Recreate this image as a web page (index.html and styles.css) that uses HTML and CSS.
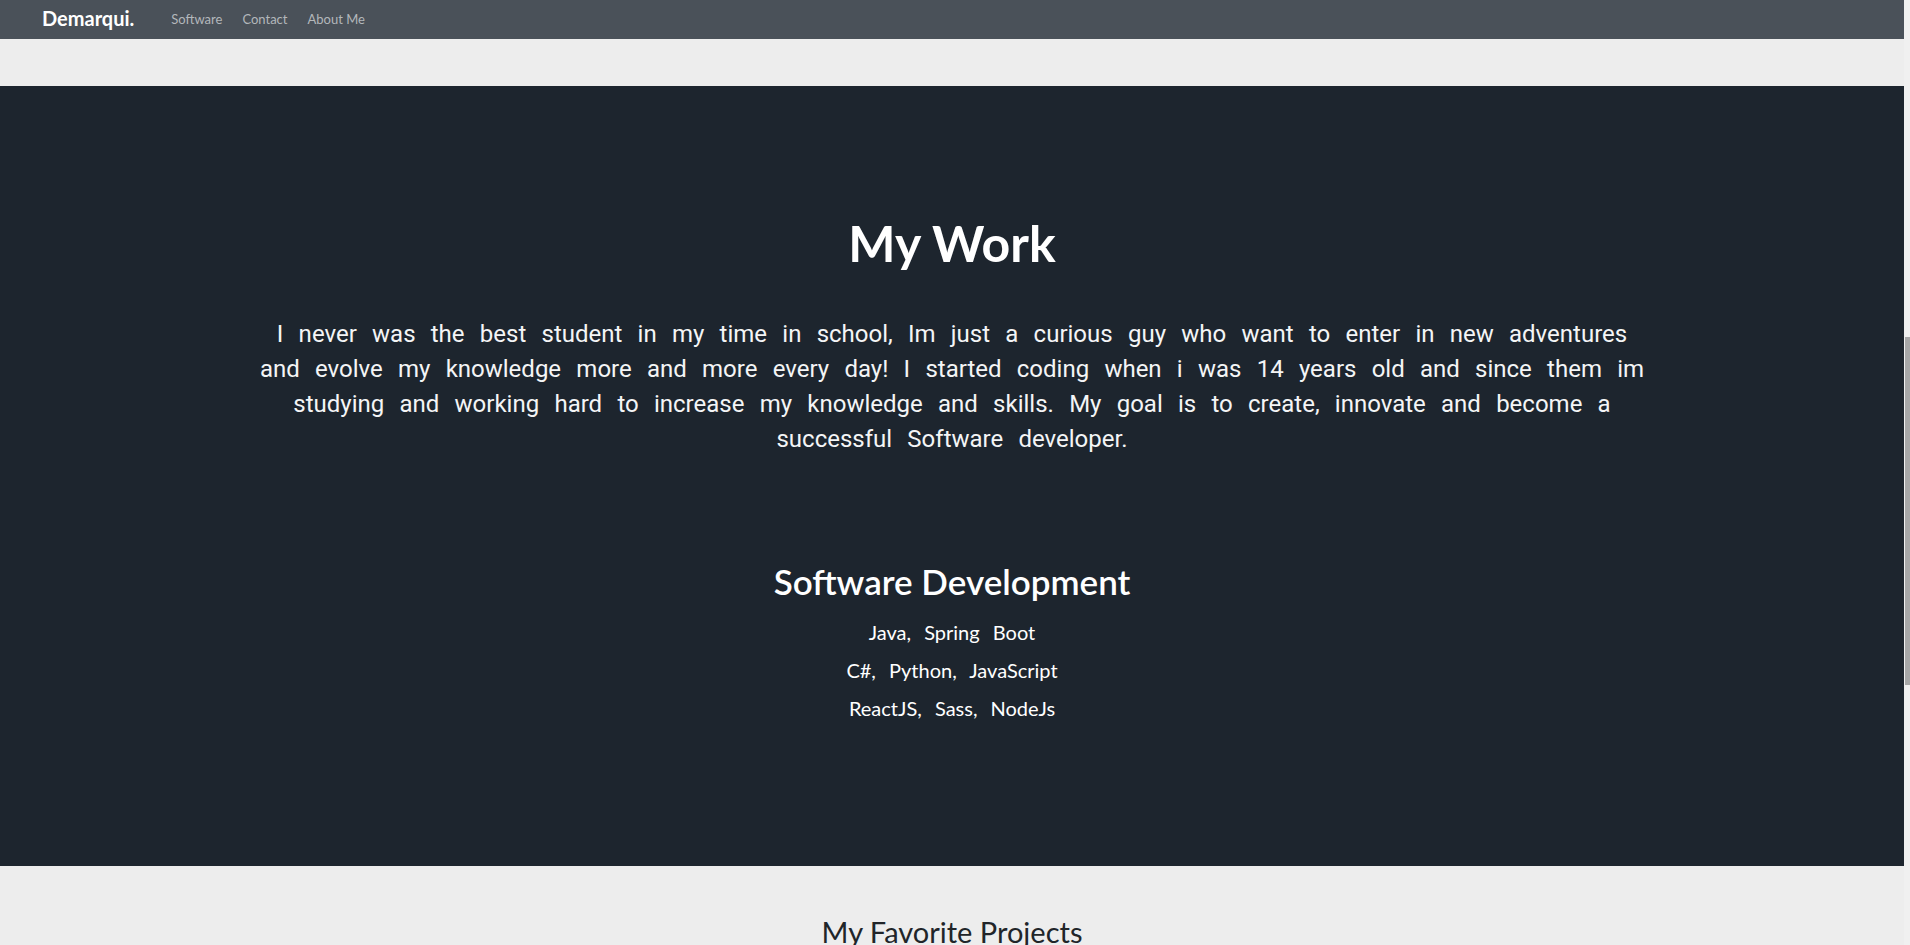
FILE: index.html
```html
<!DOCTYPE html>
<html lang="en">
<head>
<meta charset="utf-8">
<title>Demarqui.</title>
<link rel="stylesheet" href="styles.css">
</head>
<body>
<div class="page">
  <nav class="navbar">
    <a class="brand" href="#">Demarqui.</a>
    <ul class="nav-links">
      <li><a href="#">Software</a></li>
      <li><a href="#">Contact</a></li>
      <li><a href="#">About Me</a></li>
    </ul>
  </nav>
  <div class="spacer"></div>
  <section class="work">
    <h1 class="work-title">My Work</h1>
    <p class="work-text">I never was the best student in my time in school, Im just a curious guy who want to enter in new adventures and evolve my knowledge more and more every day! I started coding when i was 14 years old and since them im studying and working hard to increase my knowledge and skills. My goal is to create, innovate and become a successful Software developer.</p>
    <h2 class="skills-title">Software Development</h2>
    <ul class="skills">
      <li>Java, Spring Boot</li>
      <li>C#, Python, JavaScript</li>
      <li>ReactJS, Sass, NodeJs</li>
    </ul>
  </section>
  <section class="projects">
    <h2 class="projects-title">My Favorite Projects</h2>
  </section>
</div>
<div class="scrollbar"><div class="thumb"></div></div>
</body>
</html>
```
FILE: styles.css
```css
* { box-sizing: border-box; }

html, body {
  margin: 0;
  padding: 0;
  height: 945px;
  overflow: hidden;
}

body {
  display: flex;
  background: #ededed;
  font-family: Lato, "Noto Sans", sans-serif;
}

.page {
  flex: 1;
  display: flex;
  flex-direction: column;
  min-width: 0;
}

.navbar {
  height: 39px;
  flex: none;
  background: #4a5159;
  display: flex;
  align-items: center;
  padding-left: 42px;
  padding-bottom: 4px;
}

.brand {
  font-family: Lato, sans-serif;
  font-weight: 700;
  font-size: 20px;
  color: #ffffff;
  text-decoration: none;
  margin-right: 37px;
}

.nav-links {
  list-style: none;
  margin: 0;
  padding: 0;
  display: flex;
  gap: 20px;
}

.nav-links a {
  font-family: Lato, sans-serif;
  font-weight: 400;
  font-size: 13px;
  color: #b3b7bb;
  text-decoration: none;
}

.spacer {
  height: 47px;
  flex: none;
  background: #ededed;
}

.work {
  flex: none;
  height: 780px;
  background: #1d252e;
  color: #ffffff;
  display: flex;
  flex-direction: column;
  align-items: center;
  padding-top: 127px;
}

.work-title {
  margin: 0;
  font-family: Lato, sans-serif;
  font-weight: 700;
  font-size: 50px;
  line-height: 1.2;
}

.work-text {
  margin: 44px 0 0;
  width: 1400px;
  text-align: center;
  font-family: Roboto, sans-serif;
  font-size: 24px;
  line-height: 35px;
  word-spacing: 9.3px;
  color: #f4f5f6;
}

.skills-title {
  margin: 103px 0 0;
  font-family: Lato, sans-serif;
  font-weight: 600;
  font-size: 35px;
  line-height: 1.2;
}

.skills {
  list-style: none;
  margin: 11px 0 0;
  padding: 0;
  text-align: center;
  font-family: Lato, sans-serif;
  font-size: 20px;
  line-height: 38px;
  word-spacing: 8px;
}

.projects {
  flex: 1;
  background: #ededed;
  display: flex;
  flex-direction: column;
  align-items: center;
  padding-top: 49px;
}

.projects-title {
  margin: 0;
  font-family: Lato, sans-serif;
  font-weight: 400;
  font-size: 29px;
  line-height: 1.2;
  color: #212529;
}

.scrollbar {
  width: 6px;
  flex: none;
  background: #f0f0f0;
  padding-top: 337px;
  padding-left: 1px;
}

.thumb {
  height: 348px;
  background: #a8a8a8;
}
```
